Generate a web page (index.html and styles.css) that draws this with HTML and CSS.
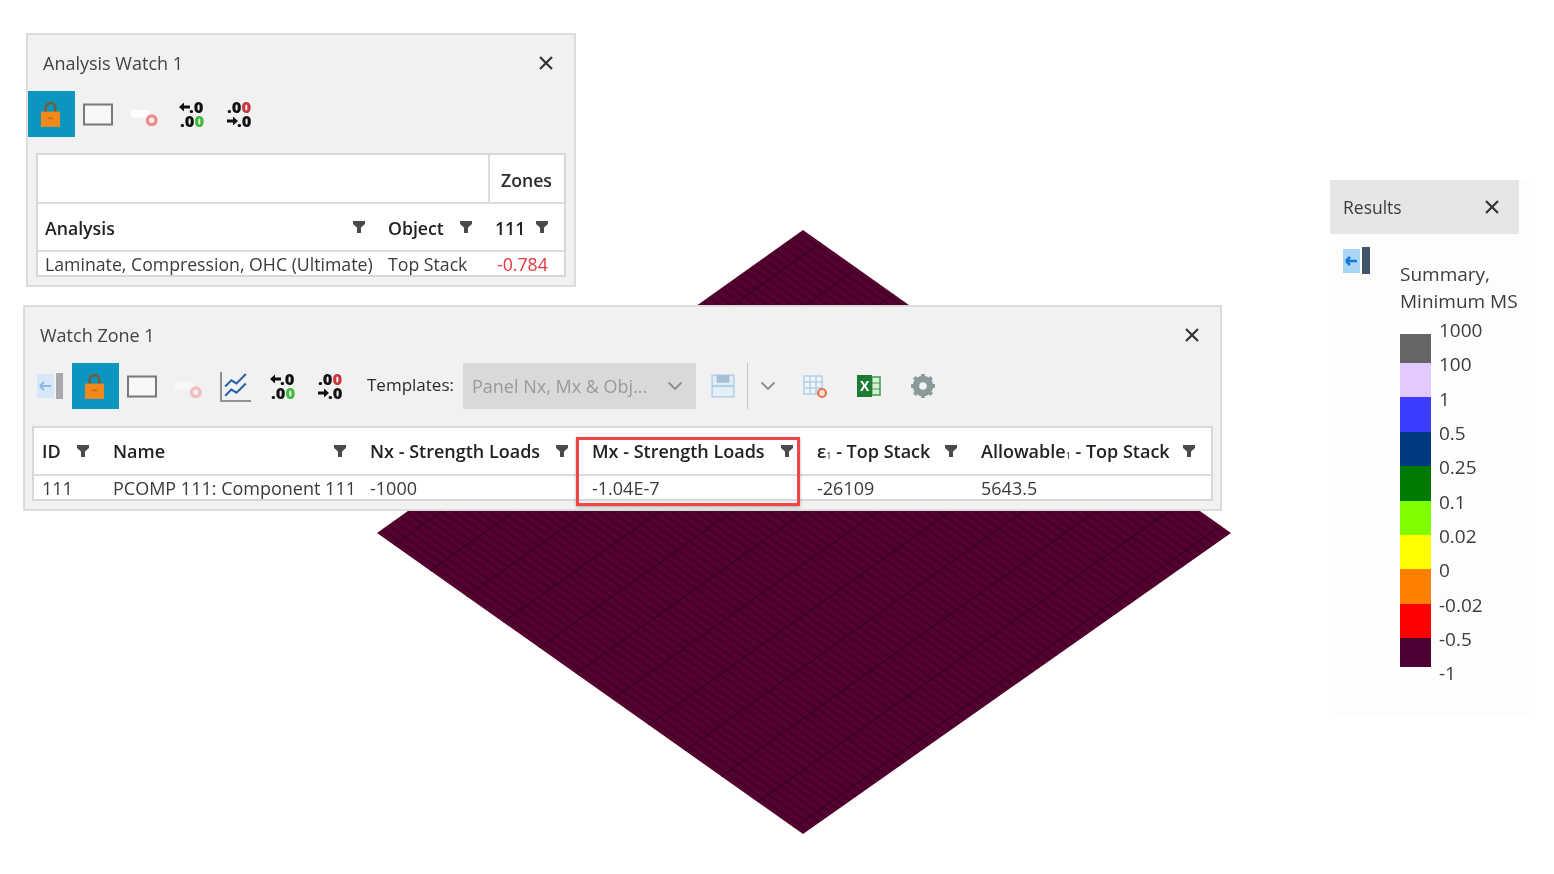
FILE: index.html

```html
<!DOCTYPE html>
<html>
<head>
    <title>Watch Zones</title>
    <link rel="stylesheet" href="styles.css">
</head>
<body>
<svg class="defs" width="0" height="0">
    <defs>
        <symbol id="funnel" viewBox="0 0 14 14"><path d="M1 1h12v3L9 7.500V13H5V7.500L1 4z" fill="#4a4a4a"/></symbol>
        <symbol id="cross" viewBox="0 0 16 16"><path d="M2 2l12 12M14 2L2 14" stroke="#333" stroke-width="2.200" fill="none"/></symbol>
        <symbol id="chevron" viewBox="0 0 16 10"><path d="M1.500 1.500L8 8l6.500-6.500" stroke="#8c8c8c" stroke-width="1.800" fill="none"/></symbol>
        <symbol id="lock" viewBox="0 0 22 28"><path d="M6 12V7a5 5 0 0 1 10 0v5" stroke="#7a5a30" stroke-width="2.500" fill="none"/><rect x="1" y="11" width="20" height="16" fill="#f08a1c"/><rect x="8" y="17" width="6" height="2" fill="#c96f10"/></symbol>
        <symbol id="frame" viewBox="0 0 30 22"><rect x="1" y="1" width="28" height="20" fill="#f7f7f7" stroke="#77777c" stroke-width="2"/></symbol>
        <symbol id="toggle" viewBox="0 0 30 24"><rect x="0" y="7" width="20" height="8" rx="4" fill="#fff"/><circle cx="22" cy="18" r="4.500" fill="none" stroke="#f08c8c" stroke-width="3.500"/></symbol>
        <symbol id="decup" viewBox="0 0 26 28">
            <path d="M0 7l5-4.500v3h6v3H5v3z" fill="#111"/>
            <text x="10" y="13" class="dec">.0</text>
            <text x="1" y="27" class="dec">.0</text><text x="15.500" y="27" class="dec dec-green">0</text>
        </symbol>
        <symbol id="decdown" viewBox="0 0 26 28">
            <text x="1" y="13" class="dec">.0</text><text x="15.500" y="13" class="dec dec-red">0</text>
            <path d="M12 21l-5-4.500v3H1v3h6v3z" fill="#111"/>
            <text x="11" y="27" class="dec">.0</text>
        </symbol>
        <pattern id="mesh-fine" width="7" height="7" patternUnits="userSpaceOnUse" patternTransform="rotate(35.300)">
            <rect width="7" height="7" fill="#56022f"/>
            <rect width="7" height="2.500" fill="#45002a"/>
        </pattern>
        <pattern id="mesh-wide" width="42" height="42" patternUnits="userSpaceOnUse" patternTransform="rotate(-35.300)">
            <rect width="42" height="1" fill="#33001c"/>
        </pattern>
    </defs>
</svg>

<div class="desktop">
    <svg class="model" width="1554" height="874" viewBox="0 0 1554 874">
        <polygon points="803,230 1231,533 803,834 377,533" fill="url(#mesh-fine)"/>
        <polygon points="803,230 1231,533 803,834 377,533" fill="url(#mesh-wide)"/>
    </svg>

    <div class="window watch-analysis">
        <div class="titlebar">
            <span>Analysis Watch 1</span>
            <svg class="close"><use href="#cross"/></svg>
        </div>
        <div class="toolbar">
            <div class="tool active"><svg class="ic-lock"><use href="#lock"/></svg></div>
            <div class="tool"><svg class="ic-frame"><use href="#frame"/></svg></div>
            <div class="tool"><svg class="ic-frame"><use href="#toggle"/></svg></div>
            <div class="tool"><svg class="ic-dec"><use href="#decup"/></svg></div>
            <div class="tool"><svg class="ic-dec"><use href="#decdown"/></svg></div>
        </div>
        <div class="grid grid-analysis">
            <div class="cell head-top span-2"></div>
            <div class="cell head-top zones">Zones</div>
            <div class="cell head">Analysis<svg class="funnel"><use href="#funnel"/></svg></div>
            <div class="cell head">Object<svg class="funnel"><use href="#funnel"/></svg></div>
            <div class="cell head">111<svg class="funnel"><use href="#funnel"/></svg></div>
            <div class="cell row">Laminate, Compression, OHC (Ultimate)</div>
            <div class="cell row">Top Stack</div>
            <div class="cell row negative">-0.784</div>
        </div>
    </div>

    <div class="window watch-zone">
        <div class="titlebar">
            <span>Watch Zone 1</span>
            <svg class="close"><use href="#cross"/></svg>
        </div>
        <div class="toolbar">
            <div class="tool">
                <svg class="ic-back" viewBox="0 0 28 28"><rect width="17" height="24" y="2" fill="#d5e7f8"/><path d="M3 14h11M3 14l4-4M3 14l4 4" stroke="#8db8e0" stroke-width="2" fill="none"/><rect x="19" y="1" width="7" height="26" fill="#a8a8ae"/></svg>
            </div>
            <div class="tool active"><svg class="ic-lock"><use href="#lock"/></svg></div>
            <div class="tool"><svg class="ic-frame"><use href="#frame"/></svg></div>
            <div class="tool pale"><svg class="ic-frame"><use href="#toggle"/></svg></div>
            <div class="tool">
                <svg class="ic-chart" viewBox="0 0 30 30"><path d="M1 1v28h29" stroke="#6f7378" stroke-width="1.500" fill="none"/><path d="M5 15l6-6 5 3 9-9M5 24l6-6 5 3 9-9" stroke="#2d5fa8" stroke-width="2" fill="none"/></svg>
            </div>
            <div class="tool"><svg class="ic-dec"><use href="#decup"/></svg></div>
            <div class="tool"><svg class="ic-dec"><use href="#decdown"/></svg></div>
            <label class="tpl-label">Templates:</label>
            <div class="tpl-select">
                <span>Panel Nx, Mx &amp; Obj...</span>
                <svg class="chevron"><use href="#chevron"/></svg>
            </div>
            <div class="tool-s">
                <svg class="ic-small" viewBox="0 0 24 24"><rect x="2" y="2" width="20" height="20" fill="#e2eef8" stroke="#b7d3ea" stroke-width="1.500"/><rect x="6" y="2" width="12" height="7" fill="#a9bfd4"/><rect x="2" y="11" width="20" height="2" fill="#b2cde4"/></svg>
            </div>
            <div class="tpl-sep"></div>
            <div class="tool-c"><svg class="chevron"><use href="#chevron"/></svg></div>
            <div class="tool-s">
                <svg class="ic-small" viewBox="0 0 26 26"><path d="M2 3h18v18H2zM2 9h18M2 15h18M8 3v18M14 3v18" stroke="#b4cfe8" stroke-width="1.500" fill="#eef5fb"/><circle cx="20" cy="20" r="4" fill="#fbe3d8" stroke="#e8744a" stroke-width="2.200"/></svg>
            </div>
            <div class="tool-s">
                <svg class="ic-small" viewBox="0 0 26 26"><rect x="12" y="4" width="12" height="18" fill="#d7efd9" stroke="#3f9c4a" stroke-width="1.500"/><path d="M16 4v18M12 10h12M12 16h12" stroke="#3f9c4a"/><rect x="1" y="2" width="15" height="22" fill="#1e7b34"/><text x="4" y="18" class="xl">X</text></svg>
            </div>
            <div class="tool-s">
                <svg class="ic-small" viewBox="0 0 24 24"><circle cx="12" cy="12" r="6.500" fill="none" stroke="#8a9a9a" stroke-width="6"/><path d="M12 1v5M12 18v5M1 12h5M18 12h5M4 4l4 4M16 16l4 4M20 4l-4 4M8 16l-4 4" stroke="#8a9a9a" stroke-width="3.500"/></svg>
            </div>
        </div>
        <div class="grid grid-zone">
            <div class="cell head">ID<svg class="funnel"><use href="#funnel"/></svg></div>
            <div class="cell head">Name<svg class="funnel"><use href="#funnel"/></svg></div>
            <div class="cell head">Nx - Strength Loads<svg class="funnel"><use href="#funnel"/></svg></div>
            <div class="cell head">Mx - Strength Loads<svg class="funnel"><use href="#funnel"/></svg></div>
            <div class="cell head">&epsilon;<sub>1</sub>&nbsp;- Top Stack<svg class="funnel"><use href="#funnel"/></svg></div>
            <div class="cell head">Allowable<sub>1</sub>&nbsp;- Top Stack<svg class="funnel"><use href="#funnel"/></svg></div>
            <div class="cell row">111</div>
            <div class="cell row">PCOMP 111: Component 111</div>
            <div class="cell row">-1000</div>
            <div class="cell row">-1.04E-7</div>
            <div class="cell row">-26109</div>
            <div class="cell row">5643.5</div>
        </div>
    </div>
    <div class="highlight"></div>

    <div class="results">
        <div class="results-title">
            <span>Results</span>
            <svg class="close"><use href="#cross"/></svg>
        </div>
        <div class="results-body">
            <svg class="ic-results" viewBox="0 0 28 28"><rect width="17" height="24" y="2" fill="#a9d6f7"/><path d="M3 14h11M3 14l4-4M3 14l4 4" stroke="#1478d4" stroke-width="2.500" fill="none"/><rect x="19" y="0" width="8" height="27" fill="#41566b"/></svg>
            <div class="legend">
                <div class="legend-title">Summary,<br>Minimum MS</div>
                <div class="legend-scale">
                    <div class="swatches">
                        <div class="swatch s-grey"></div>
                        <div class="swatch s-lilac"></div>
                        <div class="swatch s-blue"></div>
                        <div class="swatch s-navy"></div>
                        <div class="swatch s-green"></div>
                        <div class="swatch s-lime"></div>
                        <div class="swatch s-yellow"></div>
                        <div class="swatch s-orange"></div>
                        <div class="swatch s-red"></div>
                        <div class="swatch s-maroon"></div>
                    </div>
                    <div class="labels">
                        <div>1000</div><div>100</div><div>1</div><div>0.5</div><div>0.25</div><div>0.1</div><div>0.02</div><div>0</div><div>-0.02</div><div>-0.5</div><div>-1</div>
                    </div>
                </div>
            </div>
        </div>
    </div>
</div>
</body>
</html>
```

FILE: styles.css

```css
body { margin: 0; background: #fff; font-family: "Open Sans", "Noto Sans", sans-serif; color: #2b2b2b; }
.defs { position: absolute; }
.desktop { position: relative; width: 1554px; height: 874px; overflow: hidden; }
.model { position: absolute; left: 0; top: 0; }

.window { position: absolute; box-sizing: border-box; background: #f1f1f1; border: 2px solid #dcdcdc; filter: blur(0.6px); }
.watch-analysis { left: 26px; top: 33px; width: 550px; height: 254px; }
.watch-zone { left: 23px; top: 305px; width: 1199px; height: 206px; }

.titlebar { display: flex; justify-content: space-between; align-items: center; height: 56px; padding: 0 20px 0 15px; font-size: 18px; color: #444; }
.close { width: 16px; height: 16px; }

.toolbar { display: flex; align-items: center; height: 46px; }
.tool { width: 47px; height: 46px; display: flex; align-items: center; justify-content: center; flex: none; }
.tool.active { background: #0c96bf; }
.tool.pale svg { opacity: 0.5; }
.ic-lock { width: 21px; height: 27px; margin-left: -2px; }
.ic-frame { width: 30px; height: 23px; overflow: visible; margin-left: -2px; }
.ic-dec { width: 26px; height: 28px; margin-left: -2px; }
.ic-back { width: 28px; height: 28px; margin-left: 4px; }
.ic-chart { width: 31px; height: 31px; margin-left: -2px; }
.dec { font-family: "Open Sans", sans-serif; font-size: 16.500px; font-weight: 800; fill: #111; }
.dec-green { fill: #3fb83f; }
.dec-red { fill: #c8363c; }
.xl { font-family: "Open Sans", sans-serif; font-size: 14px; font-weight: 700; fill: #fff; }

.tpl-label { margin: -3px 0 0 13px; width: 96px; flex: none; font-size: 17px; font-weight: 500; }
.tpl-select { box-sizing: border-box; width: 233px; height: 46px; flex: none; display: flex; align-items: center; justify-content: space-between; padding: 0 13px 0 9px; background: #d9d9d9; color: #9a9a9a; font-size: 18px; }
.chevron { width: 16px; height: 10px; }
.tool-s { width: 54px; height: 46px; flex: none; display: flex; align-items: center; justify-content: center; }
.ic-small { width: 26px; height: 26px; }
.tpl-sep { width: 1px; height: 46px; flex: none; background: #c4c4c4; margin-left: -3px; }
.tool-c { width: 40px; flex: none; display: flex; justify-content: center; }

.grid { display: grid; box-sizing: border-box; background: #fff; border: 2px solid #d8d8d8; }
.grid-analysis { margin: 16px 8px 0; height: 124px; grid-template-columns: 343px 107px 76px; grid-template-rows: 49px 48px 1fr; font-size: 17.700px; }
.grid-analysis .cell { padding-top: 2px; padding-left: 7px; }
.grid-analysis .row { padding-top: 0; }
.grid-analysis .funnel { right: 15px; }
.grid-zone { margin: 17px 7px 0; height: 75px; grid-template-columns: 71px 257px 222px 225px 164px 1fr; grid-template-rows: 48px 1fr; font-size: 18px; }
.cell { position: relative; display: flex; align-items: center; white-space: nowrap; padding-left: 8px; }
.head { font-weight: 600; color: #222; border-bottom: 2px solid #dcdcdc; }
.head sub { font-size: 9px; font-weight: 400; align-self: flex-end; margin-bottom: 12px; }
.head-top { border-bottom: 2px solid #dcdcdc; }
.span-2 { grid-column: span 2; }
.zones { font-weight: 600; border-left: 2px solid #dcdcdc; justify-content: flex-end; padding-right: 12px; }
.funnel { position: absolute; right: 15px; top: 50%; margin-top: -7px; width: 14px; height: 14px; }
.row { color: #3a3a3a; }
.grid-analysis .negative { color: #e8343c; padding-left: 9px; }

.highlight { position: absolute; left: 576px; top: 437px; width: 224px; height: 69px; box-sizing: border-box; border: 3px solid #f04545; box-shadow: 0 1px 3px rgba(0,0,0,0.3); }

.results { position: absolute; left: 1330px; top: 180px; width: 199px; height: 535px; background: #fdfdfd; filter: blur(0.6px); }
.results-title { box-sizing: border-box; width: 189px; height: 54px; background: #e6e6e6; display: flex; align-items: center; justify-content: space-between; padding: 0 19px 0 13px; font-size: 17.500px; color: #3c3c3c; }
.results-body { display: flex; padding: 13px 0 0 13px; }
.ic-results { width: 28px; height: 28px; flex: none; }
.legend { margin: 14px 0 0 29px; }
.legend-title { font-size: 19px; line-height: 27px; color: #3c3c3c; white-space: nowrap; }
.legend-scale { display: flex; gap: 8px; }
.swatches { margin-top: 19px; width: 31px; }
.swatch { height: 34.400px; }
.s-grey { background: #666666; height: 29px; }
.s-lilac { background: #e2c9ff; }
.s-blue { background: #3c3cff; }
.s-navy { background: #003a80; }
.s-green { background: #007a00; }
.s-lime { background: #80ff00; }
.s-yellow { background: #ffff00; }
.s-orange { background: #ff8000; }
.s-red { background: #ff0000; }
.s-maroon { background: #4d0033; height: 29px; }
.labels { font-size: 19px; line-height: 34.350px; color: #3c3c3c; margin-top: -2px; }
```
